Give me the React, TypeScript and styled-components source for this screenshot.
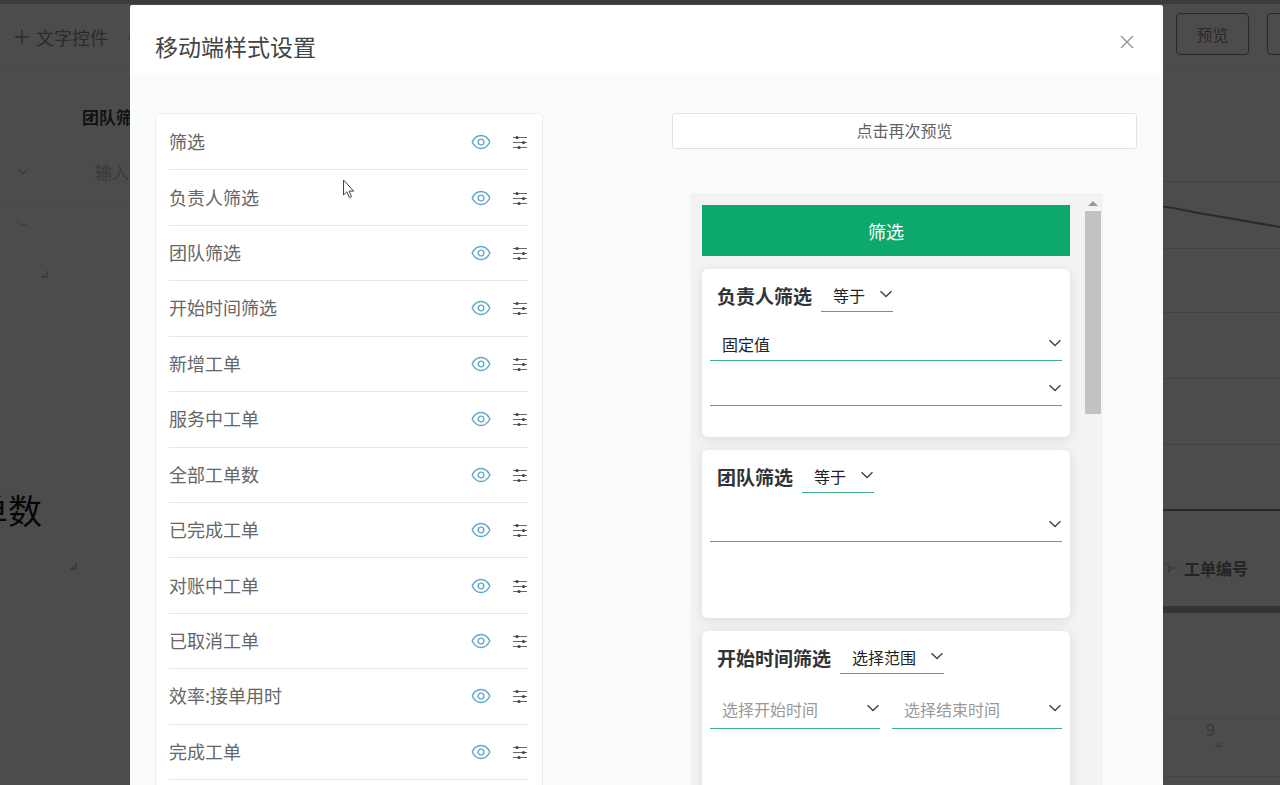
import React from 'react';
import styled, { createGlobalStyle } from 'styled-components';

const GlobalStyle = createGlobalStyle`
  * { box-sizing: border-box; }
  html, body { margin: 0; height: 100%; overflow: hidden; }
  body, button, select {
    font-family: "Noto Sans CJK SC", "Noto Sans", sans-serif;
  }
  #root { height: 100%; }
  button { cursor: pointer; }
`;

const Page = styled.div`
  display: flex;
  flex-direction: column;
  min-height: 100%;
  background: #fff;
  color: #333;
`;

const TopStrip = styled.div`
  height: 4px;
  background: #c8c8c8;
`;

const Toolbar = styled.header`
  display: flex;
  align-items: center;
  justify-content: space-between;
  height: 66px;
  padding-left: 13px;
  border-bottom: 1px solid #f0f0f0;
`;

const ToolGroup = styled.div`
  display: flex;
  gap: 14px;
`;

const ToolButton = styled.button`
  display: flex;
  align-items: center;
  gap: 5px;
  padding: 0;
  border: 0;
  background: none;
  color: #909090;
  font-size: 18px;
  line-height: 24px;
`;

const OutlineGroup = styled.div`
  display: flex;
  width: 104px;
  margin-bottom: 6px;
  overflow: hidden;
`;

const OutlineButton = styled.button`
  flex: none;
  width: 73px;
  height: 42px;
  margin-right: 18px;
  border: 1px solid #888;
  border-radius: 4px;
  background: none;
  color: #9a8484;
  font-size: 16px;
`;

const Dashboard = styled.main`
  display: flex;
  flex: 1;
  justify-content: space-between;
`;

const FilterColumn = styled.section`
  width: 160px;
  overflow: hidden;
  white-space: nowrap;
`;

const FilterTitle = styled.h2`
  margin: 33px 0 0 82px;
  color: #3c3c3c;
  font-size: 17px;
  line-height: 28px;
`;

const FilterRow = styled.div`
  display: flex;
  align-items: center;
  gap: 65px;
  height: 74px;
  padding: 8px 0 0 16px;
  border-bottom: 1px solid #eee;
  color: #c0c0c0;
  font-size: 17px;
`;

const MetricName = styled.div`
  display: flex;
  justify-content: flex-end;
  width: 42px;
  margin-top: 199px;
  color: #181818;
  font-size: 34px;
  line-height: 52px;
`;

const ChartColumn = styled.section`
  width: 117px;
`;

const ChartArea = styled.div`
  height: 441px;
  border-bottom: 2px solid #888;
`;

const ChartDrawing = styled.svg`
  display: block;
  width: 100%;
  height: 438px;
`;

const DataTable = styled.table`
  width: 100%;
  border-collapse: collapse;
  color: #777;
  font-size: 16px;

  th {
    height: 98px;
    padding: 20px 0 0;
    border-bottom: 7px solid #b0b0b0;
    line-height: 24px;
  }
  td {
    height: 109px;
    padding: 0;
    border-bottom: 1px solid #e4e4e4;
  }
  tr + tr td {
    height: 58px;
    padding-left: 43px;
    color: #bbb;
    line-height: 20px;
    vertical-align: top;
  }
`;

const ColumnLabel = styled.span`
  display: flex;
  align-items: center;
  gap: 5px;
`;

const Overlay = styled.div`
  position: fixed;
  inset: 0;
  display: flex;
  padding: 5px 117px 0 130px;
  background: rgba(0, 0, 0, 0.7);
`;

const Dialog = styled.div`
  display: flex;
  flex: 1;
  flex-direction: column;
  min-width: 0;
  overflow: hidden;
  border-radius: 3px 3px 0 0;
  background: #fafcfb;
`;

const DialogHeader = styled.header`
  display: flex;
  flex: none;
  align-items: flex-start;
  justify-content: space-between;
  height: 69px;
  padding: 25px 24px 0 25px;
  background: #fff;
`;

const DialogTitle = styled.h1`
  margin: 0;
  color: #444;
  font-size: 23px;
  font-weight: 400;
  line-height: 32px;
`;

const IconButton = styled.button`
  display: flex;
  padding: 0;
  border: 0;
  background: none;
`;

const CloseButton = styled(IconButton)`
  padding: 5px;
  color: #909090;
`;

const DialogBody = styled.div`
  display: flex;
  align-items: flex-start;
  justify-content: space-between;
  padding: 39px 26px 0 25px;
`;

const WidgetList = styled.ul`
  display: grid;
  grid-auto-rows: 1fr;
  flex: 0 1 388px;
  height: 700px;
  margin: 0;
  padding: 1px 14px 32px 13px;
  border: 1px solid #ebeeed;
  border-radius: 4px;
  background: #fff;
  list-style: none;
`;

const WidgetRow = styled.li`
  display: flex;
  align-items: center;
  gap: 22px;
  padding-right: 1px;
  border-bottom: 1px solid #e6e8e8;
  color: #666;
  font-size: 18px;
  line-height: 28px;
`;

const WidgetName = styled.span`
  flex: 1;
  padding-bottom: 2px;
`;

const PreviewColumn = styled.section`
  flex: 0 1 465px;
`;

const RefreshButton = styled.button`
  display: block;
  width: 100%;
  height: 36px;
  padding: 0 0 2px;
  border: 1px solid #dfe2e1;
  border-radius: 3px;
  background: #fff;
  color: #606266;
  font-size: 16px;
`;

const Phone = styled.div`
  display: flex;
  justify-content: space-between;
  height: 640px;
  margin: 44px 34px 0 18px;
  overflow: hidden;
  background: #f3f3f3;
`;

const PhoneScreen = styled.div`
  display: flex;
  flex: 1;
  flex-direction: column;
  gap: 13px;
  padding: 12px 15px 0 12px;
`;

const Scrollbar = styled.div`
  display: flex;
  flex: none;
  flex-direction: column;
  align-items: center;
  gap: 5px;
  width: 18px;
  padding: 7px 2px 0 0;
`;

const ScrollThumb = styled.div`
  width: 16px;
  height: 203px;
  background: #c1c3c2;
`;

const Banner = styled.button`
  flex: none;
  height: 51px;
  padding: 0;
  border: 0;
  background: #0da96c;
  color: #fff;
  font-size: 18px;
`;

const Card = styled.section`
  flex: none;
  height: 168px;
  padding: 8px;
  border-radius: 6px;
  background: #fff;
  box-shadow: 0 2px 12px rgba(0, 0, 0, 0.1);
`;

const CardHead = styled.div`
  display: flex;
  align-items: flex-end;
  gap: 9px;
  height: 35px;
  padding-left: 7px;
`;

const CardTitle = styled.h2`
  margin: 0;
  color: #303437;
  font-size: 19px;
  line-height: 32px;
`;

const Fields = styled.div<{ $top: number }>`
  display: flex;
  gap: 12px;
  padding-top: ${({ $top }) => $top}px;
`;

const Field = styled.span<{ $width?: number; $tall?: boolean }>`
  position: relative;
  display: block;
  flex: ${({ $width }) => ($width ? `0 0 ${$width}px` : '1')};

  svg {
    position: absolute;
    top: ${({ $tall }) => ($tall ? 11 : 8)}px;
    right: 0;
    pointer-events: none;
  }
`;

const Select = styled.select<{ $tall?: boolean }>`
  display: block;
  width: 100%;
  height: ${({ $tall }) => ($tall ? 39 : 33)}px;
  padding: 0 24px 0 12px;
  appearance: none;
  border: 0;
  border-bottom: 1px solid #3bb183;
  border-radius: 0;
  background: transparent;
  color: ${({ $tall }) => ($tall ? '#999' : '#222')};
  font-size: 16px;
`;

const Pointer = styled.svg`
  position: absolute;
  top: 179px;
  left: 342px;
`;

const Chevron = () => (
  <svg width="14" height="14" viewBox="0 0 14 14" fill="none" stroke="#444" strokeWidth="1.4" aria-hidden="true">
    <path d="M1.5 4.2 7 9.6l5.5-5.4" />
  </svg>
);

const Eye = () => (
  <svg width="20" height="16" viewBox="0 0 20 16" fill="none" stroke="#62a8c8" strokeWidth="1.4" aria-hidden="true">
    <path d="M1.200 8C3 4 6 1.500 10 1.500S17 4 18.800 8C17 12 14 14.500 10 14.500S3 12 1.200 8Z" />
    <circle cx="10" cy="8" r="2.900" />
  </svg>
);

const Sliders = () => (
  <svg width="14" height="16" viewBox="0 0 14 16" stroke="#666" strokeWidth="1.200" fill="#444" aria-hidden="true">
    <path d="M0 3.500h14M0 8.500h14M0 13.500h14" />
    <g stroke="none">
      <circle cx="4" cy="3.500" r="1.600" />
      <circle cx="10.500" cy="8.500" r="1.600" />
      <circle cx="6" cy="13.500" r="1.600" />
    </g>
  </svg>
);

type PickerProps = { label: string; value: string; width?: number; tall?: boolean };

const Picker = ({ label, value, width, tall }: PickerProps) => (
  <Field $width={width} $tall={tall}>
    <Select aria-label={label} $tall={tall}>
      <option>{value}</option>
    </Select>
    <Chevron />
  </Field>
);

const widgets = [
  '筛选', '负责人筛选', '团队筛选', '开始时间筛选', '新增工单', '服务中工单',
  '全部工单数', '已完成工单', '对账中工单', '已取消工单', '效率:接单用时', '完成工单',
];

export default function App() {
  return (
    <>
      <GlobalStyle />
      <Page>
        <TopStrip />
        <Toolbar>
          <ToolGroup>
            <ToolButton>
              <svg width="18" height="18" viewBox="0 0 18 18" stroke="currentColor" strokeWidth="1.300" aria-hidden="true">
                <path d="M2 9h14M9 2v14" />
              </svg>
              文字控件
            </ToolButton>
            <ToolButton>·</ToolButton>
          </ToolGroup>
          <OutlineGroup>
            <OutlineButton>预览</OutlineButton>
            <OutlineButton aria-label="更多" />
          </OutlineGroup>
        </Toolbar>
        <Dashboard>
          <FilterColumn>
            <FilterTitle>团队筛选</FilterTitle>
            <FilterRow>
              <svg width="14" height="14" viewBox="0 0 14 14" fill="none" stroke="#aaa" aria-hidden="true">
                <path d="m2 4 5 5 5-5" />
              </svg>
              输入
            </FilterRow>
            <svg width="130" height="75" viewBox="0 0 130 75" fill="none" stroke="#999" aria-hidden="true">
              <path d="m17 16 4 4h6" stroke="#bbb" />
              <path d="M41 72h6v-6M44 70v2" />
            </svg>
            <MetricName>单数</MetricName>
            <svg width="130" height="60" viewBox="0 0 130 60" fill="none" stroke="#999" aria-hidden="true">
              <path d="M70 33h6v-6M73 30v3" />
            </svg>
          </FilterColumn>
          <ChartColumn>
            <ChartArea>
              <ChartDrawing viewBox="0 0 117 438" preserveAspectRatio="none" fill="none" aria-hidden="true">
                <path d="M0 111.500h117M0 178.500h117M0 242.500h117M0 308.500h117M0 374.500h117" stroke="#dcdcdc" />
                <path d="M0 136.500C12 138 20 140 30 142L117 157" stroke="#8090a4" strokeWidth="2" />
              </ChartDrawing>
            </ChartArea>
            <DataTable>
              <thead>
                <tr>
                  <th>
                    <ColumnLabel>
                      <svg width="16" height="16" viewBox="0 0 16 16" fill="none" stroke="#aaa" aria-hidden="true">
                        <path d="M2 3c4 1 5 4 3 8M5 13l4-6M9 8h5" />
                      </svg>
                      工单编号
                    </ColumnLabel>
                  </th>
                </tr>
              </thead>
              <tbody>
                <tr><td /></tr>
                <tr>
                  <td>
                    <div>9</div>
                    <div>“</div>
                  </td>
                </tr>
              </tbody>
            </DataTable>
          </ChartColumn>
        </Dashboard>
      </Page>
      <Overlay>
        <Dialog role="dialog" aria-modal="true" aria-labelledby="dialog-title">
          <DialogHeader>
            <DialogTitle id="dialog-title">移动端样式设置</DialogTitle>
            <CloseButton aria-label="关闭">
              <svg width="14" height="14" viewBox="0 0 14 14" stroke="currentColor" strokeWidth="1.300" aria-hidden="true">
                <path d="m1 1 12 12M13 1 1 13" />
              </svg>
            </CloseButton>
          </DialogHeader>
          <DialogBody>
            <WidgetList>
              {widgets.map((name) => (
                <WidgetRow key={name}>
                  <WidgetName>{name}</WidgetName>
                  <IconButton aria-label={`显示${name}`}><Eye /></IconButton>
                  <IconButton aria-label={`设置${name}`}><Sliders /></IconButton>
                </WidgetRow>
              ))}
            </WidgetList>
            <PreviewColumn>
              <RefreshButton>点击再次预览</RefreshButton>
              <Phone>
                <PhoneScreen>
                  <Banner>筛选</Banner>
                  <Card>
                    <CardHead>
                      <CardTitle>负责人筛选</CardTitle>
                      <Picker label="负责人条件" value="等于" width={72} />
                    </CardHead>
                    <Fields $top={16}><Picker label="负责人值类型" value="固定值" /></Fields>
                    <Fields $top={12}><Picker label="负责人" value="" /></Fields>
                  </Card>
                  <Card>
                    <CardHead>
                      <CardTitle>团队筛选</CardTitle>
                      <Picker label="团队条件" value="等于" width={72} />
                    </CardHead>
                    <Fields $top={16}><Picker label="团队" value="" /></Fields>
                  </Card>
                  <Card>
                    <CardHead>
                      <CardTitle>开始时间筛选</CardTitle>
                      <Picker label="时间条件" value="选择范围" width={104} />
                    </CardHead>
                    <Fields $top={16}>
                      <Picker label="开始时间" value="选择开始时间" tall />
                      <Picker label="结束时间" value="选择结束时间" tall />
                    </Fields>
                  </Card>
                </PhoneScreen>
                <Scrollbar>
                  <svg width="10" height="6" viewBox="0 0 10 6" fill="#999" aria-hidden="true">
                    <path d="M0 6 5 1l5 5Z" />
                  </svg>
                  <ScrollThumb />
                </Scrollbar>
              </Phone>
            </PreviewColumn>
          </DialogBody>
        </Dialog>
        <Pointer width="13" height="20" viewBox="0 0 13 20" fill="#fff" stroke="#444" aria-hidden="true">
          <path d="M1.500 1v15l3.400-3.200 2.400 5.700 2.200-.9-2.400-5.500h4.600Z" />
        </Pointer>
      </Overlay>
    </>
  );
}
